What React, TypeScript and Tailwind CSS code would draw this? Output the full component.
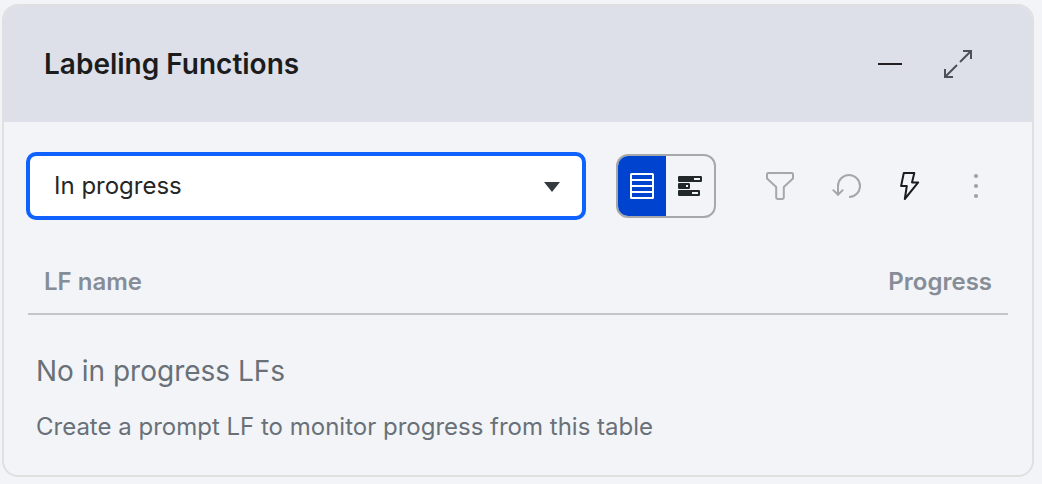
import { useState } from "react";

const statuses = ["In progress", "Completed", "Failed"];

function MinimizeIcon() {
  return (
    <svg viewBox="0 0 32 32" className="size-8" fill="none" stroke="#231f1f" strokeWidth="2" aria-hidden="true">
      <path d="M4 16H28" />
    </svg>
  );
}

function ExpandIcon() {
  return (
    <svg viewBox="0 0 32 32" className="size-8" fill="none" stroke="#4d5057" strokeWidth="2" aria-hidden="true">
      <path d="M21 3H29V11M29 3L18 14M15 17L3 29M3 21V29H11" />
    </svg>
  );
}

function ListIcon() {
  return (
    <svg viewBox="0 0 32 32" className="size-8 shrink-0" fill="none" stroke="currentColor" strokeWidth="2" aria-hidden="true">
      <rect x="5" y="4" width="22" height="24" rx="0.6" />
      <path d="M5 10H27M5 16H27M5 22H27" />
    </svg>
  );
}

function BarsIcon() {
  return (
    <svg viewBox="0 0 32 32" className="size-8 shrink-0" fill="currentColor" fillRule="evenodd" aria-hidden="true">
      <path d="M5.2 6H26.8Q28 6 28 7.2V10.8Q28 12 26.8 12H5.2Q4 12 4 10.8V7.2Q4 6 5.2 6ZM20 8V10H26V8Z" />
      <path d="M5.2 13H14.8Q16 13 16 14.2V17.8Q16 19 14.8 19H5.2Q4 19 4 17.8V14.2Q4 13 5.2 13ZM12 15V17H14V15Z" />
      <path d="M5.2 20H24.8Q26 20 26 21.2V24.8Q26 26 24.8 26H5.2Q4 26 4 24.8V21.2Q4 20 5.2 20ZM18 22V24H24V22Z" />
    </svg>
  );
}

function FilterIcon() {
  return (
    <svg viewBox="0 0 32 32" className="size-8" fill="none" stroke="#a6a7ab" strokeWidth="2" strokeLinejoin="round" aria-hidden="true">
      <path d="M3.4 3H26.6Q28 3 28 4.4V8.4L18.8 17V27.6Q18.8 29 17.4 29H12.6Q11.2 29 11.2 27.6V17L2 8.4V4.4Q2 3 3.4 3Z" />
    </svg>
  );
}

function ResetIcon() {
  return (
    <svg viewBox="0 0 32 32" className="size-8" fill="none" stroke="#a6a7ab" strokeWidth="2" aria-hidden="true">
      <path d="M19 27A11 11 0 1 0 8 16V24.5" />
      <path d="M2.8 19.6L8 24.8L13.2 19.6" />
    </svg>
  );
}

function BoltIcon() {
  return (
    <svg viewBox="0 0 32 32" className="size-8" fill="none" stroke="#1c1c1e" strokeWidth="2" strokeLinejoin="round" aria-hidden="true">
      <path d="M8.8 3H19.3L17 12.4H23.2L9.8 29L11.8 16H6.1Z" />
    </svg>
  );
}

function MoreIcon() {
  return (
    <svg viewBox="0 0 32 32" className="size-8" fill="#a0a1a5" aria-hidden="true">
      <circle cx="16" cy="6" r="2.1" />
      <circle cx="16" cy="16" r="2.1" />
      <circle cx="16" cy="26" r="2.1" />
    </svg>
  );
}

const views = [
  { id: "list", label: "List view", Icon: ListIcon },
  { id: "bars", label: "Bar view", Icon: BarsIcon },
];

const actions = [
  { label: "Filter", Icon: FilterIcon },
  { label: "Reset", Icon: ResetIcon },
  { label: "Run", Icon: BoltIcon },
  { label: "More options", Icon: MoreIcon },
];

export default function App() {
  const [status, setStatus] = useState("In progress");
  const [view, setView] = useState("list");

  return (
    <main className="min-h-screen bg-[#f2f4f8] pt-1 pr-2 pb-[7px] pl-0.5 font-['Inter',sans-serif]">
      <section className="overflow-hidden rounded-2xl border-2 border-[#dfe1e1] bg-[#f2f4f8]">
        <header className="flex items-center bg-[#dde0e8] py-[26px] pr-[42px] pl-10">
          <h1 className="flex-1 text-[28px] leading-10 font-semibold text-[#1c1c1c]">Labeling Functions</h1>
          <div className="flex gap-1">
            <button type="button" aria-label="Minimize" className="flex size-16 items-center justify-center">
              <MinimizeIcon />
            </button>
            <button type="button" aria-label="Expand" className="flex size-16 items-center justify-center">
              <ExpandIcon />
            </button>
          </div>
        </header>

        <div className="px-6 pt-8 pb-8">
          <div className="flex items-center">
            <div className="relative flex-1">
              <select
                aria-label="Status"
                value={status}
                onChange={(e) => setStatus(e.target.value)}
                className="block h-16 w-full appearance-none rounded-lg border-2 border-[#0f62fe] bg-white pr-16 pl-6 text-2xl text-[#262626] ring-2 ring-[#0f62fe] outline-none"
              >
                {statuses.map((s) => (
                  <option key={s}>{s}</option>
                ))}
              </select>
              <svg viewBox="0 0 16 10" className="pointer-events-none absolute top-7 right-6 h-2.5 w-4" fill="#343a3f" aria-hidden="true">
                <path d="M0 0H16L8 10Z" />
              </svg>
            </div>

            <div className="ml-8 flex h-16 w-[100px] overflow-hidden rounded-xl border-2 border-[#a6a8a9]">
              {views.map(({ id, label, Icon }) => (
                <button
                  key={id}
                  type="button"
                  aria-label={label}
                  aria-pressed={view === id}
                  onClick={() => setView(id)}
                  className="flex flex-1 items-center justify-center text-[#21272a] aria-pressed:bg-[#0043ce] aria-pressed:text-white"
                >
                  <Icon />
                </button>
              ))}
            </div>

            <div className="ml-[33px] flex gap-px">
              {actions.map(({ label, Icon }) => (
                <button key={label} type="button" aria-label={label} className="flex size-16 items-center justify-center">
                  <Icon />
                </button>
              ))}
            </div>
          </div>

          <table className="mt-8 w-full border-separate border-spacing-0">
            <thead>
              <tr className="text-2xl text-[#878d96]">
                <th scope="col" className="border-b-2 border-[#c4c5c7] px-4 pt-4 pb-[15px] text-left font-semibold">
                  LF name
                </th>
                <th scope="col" className="border-b-2 border-[#c4c5c7] px-4 pt-4 pb-[15px] text-right font-semibold">
                  Progress
                </th>
              </tr>
            </thead>
            <tbody>
              <tr>
                <td colSpan={2} className="px-2 pt-9 text-[#697077]">
                  <p className="text-[28px] leading-10">No in progress LFs</p>
                  <p className="mt-5 text-2xl">Create a prompt LF to monitor progress from this table</p>
                </td>
              </tr>
            </tbody>
          </table>
        </div>
      </section>
    </main>
  );
}
